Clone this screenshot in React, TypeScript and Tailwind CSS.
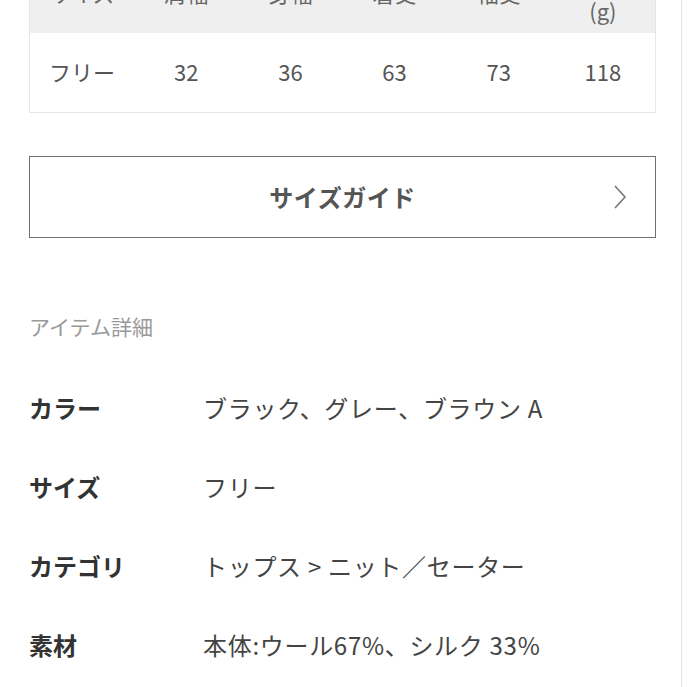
const headers = ['サイズ', '肩幅', '身幅', '着丈', '袖丈', '重量\n(g)'];
const sizes = [['フリー', '32', '36', '63', '73', '118']];

const details: [string, string][] = [
    ['カラー', 'ブラック、グレー、ブラウン A'],
    ['サイズ', 'フリー'],
    ['カテゴリ', 'トップス > ニット／セーター'],
    ['素材', '本体:ウール67%、シルク 33%'],
];

const App = () => {
    return (
        <div
            className="flex min-h-[687px] w-[687px] overflow-hidden bg-white"
            style={{ fontFamily: '"Noto Sans CJK JP", "Noto Sans", sans-serif' }}
        >
            <div className="w-[682px] shrink-0 border-r border-[#e2e2e2] pl-[29px] pr-[25px]">
                {/* size table */}
                <div className="-mt-[50px] border border-[#e6e6e6]">
                    <div className="grid h-[82px] grid-cols-6 bg-[#efefef]">
                        {headers.map((h) => (
                            <div
                                key={h}
                                className="flex items-center justify-center whitespace-pre-line text-center text-[22px] leading-[36px] text-[#666]"
                            >
                                {h}
                            </div>
                        ))}
                    </div>
                    {sizes.map((row) => (
                        <div key={row[0]} className="grid h-[79px] grid-cols-6 bg-white pb-[3px]">
                            {row.map((cell, i) => (
                                <div key={i} className="flex items-center justify-center text-[22px] text-[#555]">
                                    {cell}
                                </div>
                            ))}
                        </div>
                    ))}
                </div>

                {/* size guide */}
                <button className="relative mt-[43px] flex h-[82px] w-full items-center justify-center border-[1.5px] border-[#707070] bg-white">
                    <span className="text-[24px] font-bold tracking-[0.5px] text-[#555]">サイズガイド</span>
                    <svg
                        className="absolute right-[28px] top-1/2 -translate-y-1/2"
                        width="14"
                        height="26"
                        viewBox="0 0 14 26"
                        fill="none"
                    >
                        <polyline points="2,2 12,13 2,24" stroke="#777" strokeWidth="1.6" />
                    </svg>
                </button>

                {/* item details */}
                <div className="mt-[74px] flex h-[30px] items-center text-[21px] text-[#999]">アイテム詳細</div>
                <div className="mt-[26px]">
                    {details.map(([label, value]) => (
                        <div key={label} className="flex h-[79px] items-center text-[24px]">
                            <div className="w-[174px] shrink-0 font-bold text-[#333]">{label}</div>
                            <div className="tracking-[0.7px] text-[#444]">{value}</div>
                        </div>
                    ))}
                </div>
            </div>
        </div>
    );
};

export default App;
